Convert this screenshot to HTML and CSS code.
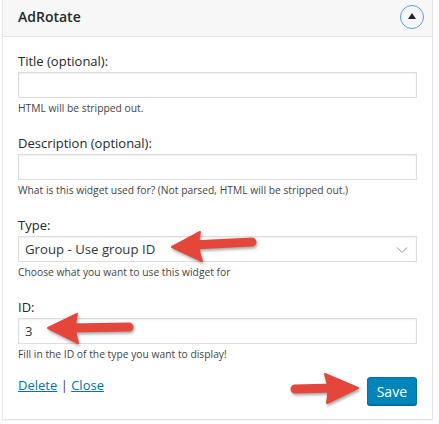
FILE: index.html
```html
<!DOCTYPE html>
<html>
<head>
<meta charset="utf-8">
<link rel="stylesheet" href="styles.css">
</head>
<body>
<div class="widget">
  <div class="widget-top">
    <h3 class="widget-title">AdRotate</h3>
    <span class="toggle"><span class="tri"></span></span>
  </div>
  <div class="widget-inside">
    <div class="field">
      <label class="lbl">Title (optional):</label>
      <div class="input"></div>
      <div class="help">HTML will be stripped out.</div>
    </div>
    <div class="field">
      <label class="lbl">Description (optional):</label>
      <div class="input"></div>
      <div class="help">What is this widget used for? (Not parsed, HTML will be stripped out.)</div>
    </div>
    <div class="field">
      <label class="lbl">Type:</label>
      <div class="input select"><span class="val">Group - Use group ID</span>
        <svg class="chev" width="12" height="8" viewBox="0 0 12 8"><path d="M1 1.5 L6 6.5 L11 1.5" fill="none" stroke="#8c8f94" stroke-width="1"/></svg>
      </div>
      <div class="help">Choose what you want to use this widget for</div>
    </div>
    <div class="field">
      <label class="lbl">ID:</label>
      <div class="input"><span class="val">3</span></div>
      <div class="help">Fill in the ID of the type you want to display!</div>
    </div>
    <div class="actions">
      <div class="links"><a href="#">Delete</a> | <a href="#">Close</a></div>
      <button class="save">Save</button>
    </div>
  </div>
</div>
<svg class="arrows" width="439" height="424" viewBox="0 0 439 424">
  <g fill="#e5463c" stroke="#e5463c" stroke-linecap="round" stroke-linejoin="round">
    <line x1="192" y1="245" x2="252" y2="242" stroke-width="9"/>
    <path d="M172 247 L200 232 Q196 246 202 261 Z" stroke-width="2"/>
    <line x1="70" y1="328" x2="129" y2="327" stroke-width="9"/>
    <path d="M48 328 L77 314 Q73 328 78 343 Z" stroke-width="2"/>
    <line x1="295" y1="389" x2="335" y2="388" stroke-width="9"/>
    <path d="M358 388 L325 374 Q330 388 327 403 Z" stroke-width="2"/>
  </g>
</svg>
</body>
</html>
```

FILE: styles.css
```css
html, body {
  margin: 0;
  padding: 0;
  background: #fff;
}
body {
  position: relative;
  width: 439px;
  height: 424px;
  overflow: hidden;
  font-family: "Open Sans", "Noto Sans", sans-serif;
  color: #23282d;
}
.widget {
  margin: -1px 0 0 2px;
  width: 429px;
  border: 1px solid #e5e5e5;
  background: #fff;
  box-shadow: 0 1px 1px rgba(0,0,0,0.04);
}
.widget-top {
  height: 37px;
  box-sizing: border-box;
  background: #f7f7f7;
  border-bottom: 1px solid #e5e5e5;
  display: flex;
  align-items: center;
  justify-content: space-between;
  padding: 0 8px 3px 15px;
}
.widget-title {
  margin: 0;
  font-size: 14px;
  font-weight: 600;
  color: #23282d;
}
.toggle {
  width: 24px;
  height: 24px;
  border: 1.5px solid #5b9dd9;
  border-radius: 50%;
  display: flex;
  align-items: center;
  justify-content: center;
  box-sizing: border-box;
}
.tri {
  width: 0;
  height: 0;
  border-left: 4px solid transparent;
  border-right: 4px solid transparent;
  border-bottom: 6px solid #23282d;
  margin-top: -1px;
}
.widget-inside {
  padding: 15px 15px 14px 15px;
}
.field {
  margin-bottom: 18px;
}
.lbl {
  display: block;
  font-size: 13px;
  line-height: 18px;
  margin-bottom: 2px;
}
.input {
  height: 26px;
  box-sizing: border-box;
  border: 1px solid #ddd;
  box-shadow: inset 0 1px 2px rgba(0,0,0,0.07);
  background: #fff;
  display: flex;
  align-items: center;
  padding: 0 6px;
  position: relative;
}
.val {
  font-size: 13.2px;
  color: #32373c;
}
.select .chev {
  position: absolute;
  right: 8px;
  top: 9px;
}
.help {
  margin-top: 2px;
  font-size: 10.3px;
  line-height: 16px;
  color: #444;
}
.actions {
  display: flex;
  justify-content: space-between;
  align-items: flex-start;
  margin-top: -3px;
}
.links {
  font-size: 13px;
  line-height: 18px;
  color: #444;
  margin-top: -1px;
}
.links a {
  color: #0073aa;
}
.save {
  font-family: inherit;
  font-size: 14px;
  color: #fff;
  background: #0085ba;
  border: 1px solid #0073aa;
  border-radius: 3px;
  box-shadow: 0 1px 0 #006799;
  height: 28px;
  padding: 0 9px;
  margin-top: 0;
}
.arrows {
  position: absolute;
  left: 0;
  top: 0;
  pointer-events: none;
  filter: drop-shadow(1px 2px 1.5px rgba(0,0,0,0.35));
}
```
